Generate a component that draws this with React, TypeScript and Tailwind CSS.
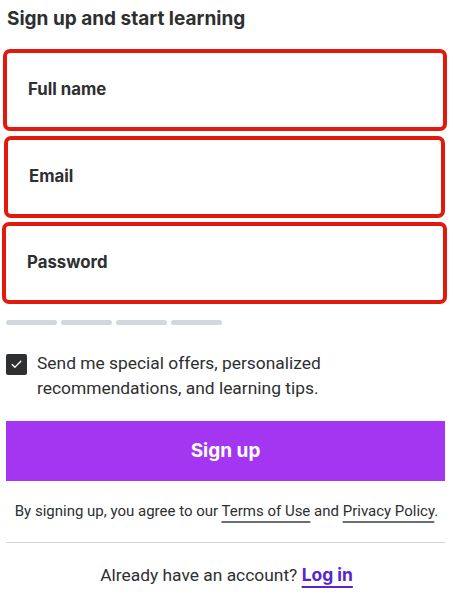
import { Check } from "lucide-react";

function Field({ label, className }: { label: string; className: string }) {
  return (
    <div
      className={`flex h-[82px] items-center rounded-[7px] border-4 border-[#e2190d] pl-[21px] ${className}`}
    >
      <span className="font-['Inter',sans-serif] text-[16.8px] font-bold text-[#2d2f31]">{label}</span>
    </div>
  );
}

export default function App() {
  return (
    <div className="h-[598px] w-[453px] bg-white font-['Roboto',sans-serif] text-[#2d2f31]">
      <h1 className="pl-[7px] pt-[6px] font-['Inter',sans-serif] text-[19px] font-bold leading-[26px]">
        Sign up and start learning
      </h1>

      <div className="mt-[17px] flex flex-col">
        <Field label="Full name" className="ml-[3px] mr-[6px]" />
        <Field label="Email" className="ml-[4px] mr-[8px] mt-[5px]" />
        <Field label="Password" className="ml-[2px] mr-[6px] mt-[4px]" />
      </div>

      <div className="ml-[6px] mt-[16px] flex gap-[4px]">
        <div className="h-[5px] w-[51px] rounded-full bg-[#d1d7dc]" />
        <div className="h-[5px] w-[51px] rounded-full bg-[#d1d7dc]" />
        <div className="h-[5px] w-[51px] rounded-full bg-[#d1d7dc]" />
        <div className="h-[5px] w-[51px] rounded-full bg-[#d1d7dc]" />
      </div>

      <div className="ml-[6px] mt-[26px] flex items-start gap-[10px]">
        <div className="mt-[3px] flex size-[21px] shrink-0 items-center justify-center rounded-[2px] bg-[#2d2f31]">
          <Check className="size-[13px] text-white" strokeWidth={2.5} />
        </div>
        <p className="text-[17.4px] leading-[25px] text-[#2d2f31]">
          Send me special offers, personalized
          <br />
          recommendations, and learning tips.
        </p>
      </div>

      <button className="ml-[6px] mt-[20px] flex h-[60px] w-[439px] items-center justify-center bg-[#a435f0] font-['Inter',sans-serif] text-[19px] font-bold text-white">
        Sign up
      </button>

      <p className="mt-[20px] text-center text-[15px] leading-5 text-[#2d2f31]">
        By signing up, you agree to our{" "}
        <span className="underline decoration-[#6a6f73] decoration-2 underline-offset-[5px]">Terms of Use</span> and{" "}
        <span className="underline decoration-[#6a6f73] decoration-2 underline-offset-[5px]">Privacy Policy</span>.
      </p>

      <div className="ml-[6px] mt-[21px] h-px w-[439px] bg-[#d1d7dc]" />

      <p className="mt-[20px] text-center text-[17.4px] leading-6 text-[#2d2f31]">
        Already have an account?{" "}
        <span className="font-['Inter',sans-serif] font-bold text-[#5624d0] underline decoration-2 underline-offset-[5px]">
          Log in
        </span>
      </p>
    </div>
  );
}
